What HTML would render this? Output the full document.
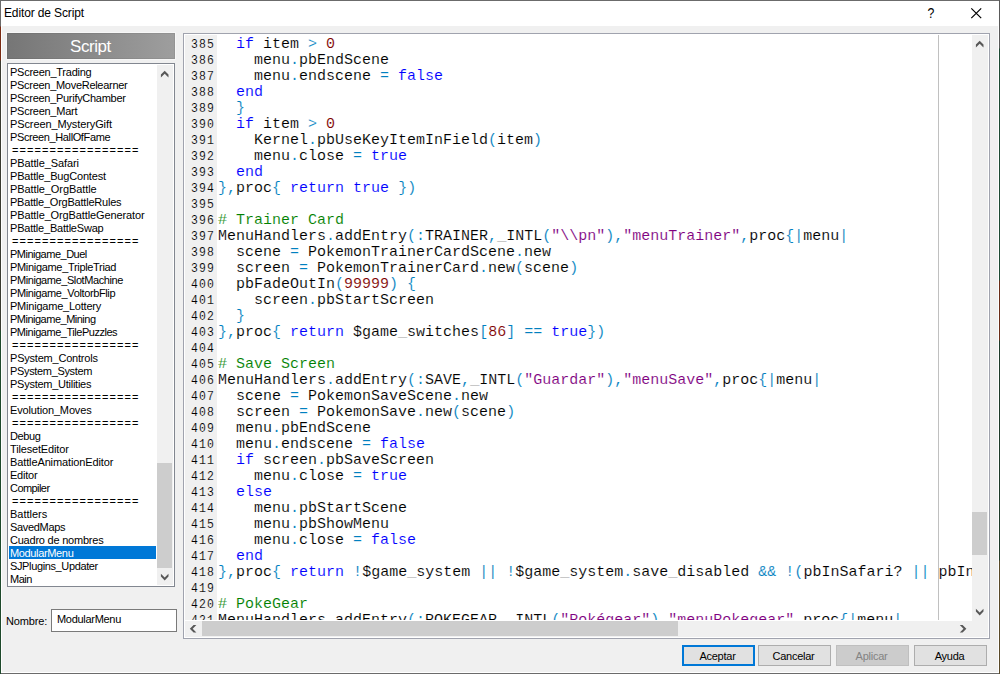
<!DOCTYPE html>
<html lang="es">
<head>
<meta charset="utf-8">
<title>Editor de Script</title>
<style>
*{box-sizing:border-box;margin:0;padding:0}
html,body{width:1000px;height:674px;overflow:hidden;background:#f0f0f0}
body{position:relative;font-family:"Liberation Sans",sans-serif;font-size:11px;color:#000}
.abs{position:absolute}
#edgeL{left:0;top:0;width:1px;height:674px;background:linear-gradient(#6b6b6b 0,#6b6b6b 26px,#7a2a12 27px,#7a2a12 60px,#3a3a30 61px,#3a3a30 330px,#1f4a2c 331px,#1f4a2c 674px)}
#edgeL2{left:1px;top:1px;width:1px;height:672px;background:#fff}
#edgeT{left:0;top:0;width:1000px;height:1px;background:#6b6b6b}
#edgeR{left:999px;top:0;width:1px;height:674px;background:linear-gradient(#5a5a5a 0,#5a5a5a 48px,#1d4a33 49px,#1d4a33 280px,#6a2d18 281px,#6a2d18 340px,#1d3a2a 341px,#1d3a2a 560px,#5a4a2a 561px,#5a4a2a 674px)}
#edgeR2{left:998px;top:1px;width:1px;height:672px;background:#fff}
#edgeB{left:0;top:673px;width:1000px;height:1px;background:#6b6b6b}
#edgeB2{left:1px;top:672px;width:998px;height:1px;background:#fff}
#titlebar{left:1px;top:1px;width:998px;height:25px;background:#fff}
#title{left:4px;top:6px;font-size:12px;line-height:15px;white-space:nowrap;letter-spacing:-0.13px}
#help{left:926.3px;top:6px;width:10px;font-size:14px;line-height:15px;text-align:center;transform:scaleX(.88)}
#hdr{left:7px;top:33px;width:168px;height:26px;background:linear-gradient(90deg,#767676,#9e9e9e);color:#fff;font-size:17px;letter-spacing:-0.45px;line-height:27px;padding-right:1px;text-align:center;box-shadow:0 0 0 1px #f7f7f7,inset 0 0 0 1px rgba(0,0,0,0.06)}
#list{left:7px;top:63px;width:168px;height:524px;border:1px solid #828790;background:#fff}
#items{left:1px;top:1px;width:147px;line-height:13px;font-size:11px;white-space:nowrap;letter-spacing:-0.2px}
#items div{height:13px;padding:1px 0 0 1px}
#items .sep{letter-spacing:1.07px;padding-left:3.1px}
#items .mg{letter-spacing:-0.45px}
#items .sel{background:#0078d7;color:#fff;letter-spacing:-0.34px}
.sb{background:#f0f0f0}
.thumb{background:#cdcdcd}
#nombre{left:6px;top:615px;font-size:11px;line-height:13px;letter-spacing:-0.15px}
#input{left:51px;top:609px;width:126px;height:23px;border:1px solid #7a7a7a;background:#fff;font-size:11px;line-height:13px;padding:3px 0 0 5px;letter-spacing:-0.3px}
#panel{left:183px;top:33px;width:807px;height:606px;border:1px solid #a0a3ae;background:#fff}
#gutter{left:1px;top:1px;width:32px;height:585px;background:#f0f0f0;overflow:hidden}
#nums{left:6.2px;top:2px;font-family:"Liberation Mono",monospace;font-size:13px;line-height:16px;letter-spacing:1.29px;transform:scaleX(.88);transform-origin:0 0}
#nums div{height:16px;-webkit-text-stroke:0.12px #f0f0f0}
#codewrap{left:33px;top:1px;width:755px;height:585px;overflow:hidden;background:#fff}
#code{left:1px;top:2px;font-family:"Liberation Mono",monospace;font-size:15px;line-height:16px}
#code div{height:16px;white-space:pre;-webkit-text-stroke:0.12px #fff}
.k{color:#0000ff}.o{color:#0080c0}.n{color:#800000}.c{color:#008000}.s{color:#800080}
#guide{left:754px;top:1px;width:1px;height:585px;background:#c0c0c0}
.btn{top:645px;width:73px;height:21px;border:1px solid #adadad;background:#e1e1e1;font-size:11px;line-height:19px;text-align:center;letter-spacing:-0.25px;padding:1px 2px 0 0}
#b1{left:682px;border:2px solid #0078d7;line-height:17px}
#b2{left:758px}
#b3{left:836px;color:#838383;background:#cccccc;border-color:#bfbfbf}
#b4{left:914px}
svg{position:absolute;overflow:visible}
</style>
</head>
<body>
<div class="abs" id="titlebar"></div>
<div class="abs" id="title">Editor de Script</div>
<div class="abs" id="help">?</div>
<svg style="left:970.8px;top:7.8px" width="11" height="11" viewBox="0 0 11 11"><path d="M0.3 0.3L10.2 10.2M10.2 0.3L0.3 10.2" stroke="#000" stroke-width="1.2" fill="none"/></svg>

<div class="abs" id="hdr">Script</div>
<div class="abs" id="list">
<div class="abs" id="items">
<div style="letter-spacing:-0.25px">PScreen_Trading</div>
<div style="letter-spacing:-0.29px">PScreen_MoveRelearner</div>
<div style="letter-spacing:-0.29px">PScreen_PurifyChamber</div>
<div style="letter-spacing:-0.26px">PScreen_Mart</div>
<div style="letter-spacing:-0.11px">PScreen_MysteryGift</div>
<div style="letter-spacing:-0.38px">PScreen_HallOfFame</div>
<div class="sep">=================</div>
<div style="letter-spacing:-0.11px">PBattle_Safari</div>
<div style="letter-spacing:-0.18px">PBattle_BugContest</div>
<div style="letter-spacing:-0.09px">PBattle_OrgBattle</div>
<div style="letter-spacing:-0.22px">PBattle_OrgBattleRules</div>
<div style="letter-spacing:-0.12px">PBattle_OrgBattleGenerator</div>
<div style="letter-spacing:-0.21px">PBattle_BattleSwap</div>
<div class="sep">=================</div>
<div style="letter-spacing:-0.50px">PMinigame_Duel</div>
<div style="letter-spacing:-0.32px">PMinigame_TripleTriad</div>
<div style="letter-spacing:-0.42px">PMinigame_SlotMachine</div>
<div style="letter-spacing:-0.38px">PMinigame_VoltorbFlip</div>
<div style="letter-spacing:-0.22px">PMinigame_Lottery</div>
<div style="letter-spacing:-0.50px">PMinigame_Mining</div>
<div style="letter-spacing:-0.47px">PMinigame_TilePuzzles</div>
<div class="sep">=================</div>
<div style="letter-spacing:-0.21px">PSystem_Controls</div>
<div style="letter-spacing:-0.34px">PSystem_System</div>
<div style="letter-spacing:-0.26px">PSystem_Utilities</div>
<div class="sep">=================</div>
<div style="letter-spacing:-0.15px">Evolution_Moves</div>
<div class="sep">=================</div>
<div style="letter-spacing:-0.38px">Debug</div>
<div style="letter-spacing:-0.16px">TilesetEditor</div>
<div style="letter-spacing:-0.12px">BattleAnimationEditor</div>
<div style="letter-spacing:-0.22px">Editor</div>
<div style="letter-spacing:-0.56px">Compiler</div>
<div class="sep">=================</div>
<div style="letter-spacing:-0.02px">Battlers</div>
<div style="letter-spacing:-0.32px">SavedMaps</div>
<div style="letter-spacing:-0.22px">Cuadro de nombres</div>
<div class="sel" style="letter-spacing:-0.35px">ModularMenu</div>
<div style="letter-spacing:-0.37px">SJPlugins_Updater</div>
<div style="letter-spacing:-0.50px">Main</div>
</div>
<div class="abs sb" style="left:149px;top:1px;width:16px;height:520px"></div>
<div class="abs thumb" style="left:149px;top:399px;width:15px;height:105px"></div>
<svg style="left:152.9px;top:6.9px" width="7.4" height="6.2" viewBox="0 0 7.4 6.2"><polygon points="3.7,-0.2 7.5,3.6 7.5,6.4 3.7,2.7 -0.1,6.4 -0.1,3.6" fill="#585858"/></svg>
<svg style="left:152.9px;top:509.8px" width="7.4" height="6.2" viewBox="0 0 7.4 6.2"><polygon points="-0.1,-0.2 3.7,3.5 7.5,-0.2 7.5,2.6 3.7,6.4 -0.1,2.6" fill="#585858"/></svg>
</div>
<div class="abs" id="nombre">Nombre:</div>
<div class="abs" id="input">ModularMenu</div>

<div class="abs" id="panel">
<div class="abs" id="gutter"><div class="abs" id="nums">
<div>385</div>
<div>386</div>
<div>387</div>
<div>388</div>
<div>389</div>
<div>390</div>
<div>391</div>
<div>392</div>
<div>393</div>
<div>394</div>
<div>395</div>
<div>396</div>
<div>397</div>
<div>398</div>
<div>399</div>
<div>400</div>
<div>401</div>
<div>402</div>
<div>403</div>
<div>404</div>
<div>405</div>
<div>406</div>
<div>407</div>
<div>408</div>
<div>409</div>
<div>410</div>
<div>411</div>
<div>412</div>
<div>413</div>
<div>414</div>
<div>415</div>
<div>416</div>
<div>417</div>
<div>418</div>
<div>419</div>
<div>420</div>
<div>421</div>
</div></div>
<div class="abs" id="codewrap"><div class="abs" id="code">
<div>  <span class="k">if</span> item <span class="o">&gt;</span> <span class="n">0</span></div>
<div>    menu<span class="o">.</span>pbEndScene</div>
<div>    menu<span class="o">.</span>endscene <span class="o">=</span> <span class="k">false</span></div>
<div>  <span class="k">end</span></div>
<div>  <span class="o">}</span></div>
<div>  <span class="k">if</span> item <span class="o">&gt;</span> <span class="n">0</span></div>
<div>    Kernel<span class="o">.</span>pbUseKeyItemInField<span class="o">(</span>item<span class="o">)</span></div>
<div>    menu<span class="o">.</span>close <span class="o">=</span> <span class="k">true</span></div>
<div>  <span class="k">end</span></div>
<div><span class="o">}</span><span class="o">,</span>proc<span class="o">{</span> <span class="k">return</span> <span class="k">true</span> <span class="o">}</span><span class="o">)</span></div>
<div>&nbsp;</div>
<div><span class="c"># Trainer Card</span></div>
<div>MenuHandlers<span class="o">.</span>addEntry<span class="o">(</span><span class="o">:</span>TRAINER<span class="o">,</span>_INTL<span class="o">(</span><span class="s">&quot;\\pn&quot;</span><span class="o">)</span><span class="o">,</span><span class="s">&quot;menuTrainer&quot;</span><span class="o">,</span>proc<span class="o">{</span><span class="o">|</span>menu<span class="o">|</span></div>
<div>  scene <span class="o">=</span> PokemonTrainerCardScene<span class="o">.</span>new</div>
<div>  screen <span class="o">=</span> PokemonTrainerCard<span class="o">.</span>new<span class="o">(</span>scene<span class="o">)</span></div>
<div>  pbFadeOutIn<span class="o">(</span><span class="n">99999</span><span class="o">)</span> <span class="o">{</span></div>
<div>    screen<span class="o">.</span>pbStartScreen</div>
<div>  <span class="o">}</span></div>
<div><span class="o">}</span><span class="o">,</span>proc<span class="o">{</span> <span class="k">return</span> $game_switches<span class="o">[</span><span class="n">86</span><span class="o">]</span> <span class="o">=</span><span class="o">=</span> <span class="k">true</span><span class="o">}</span><span class="o">)</span></div>
<div>&nbsp;</div>
<div><span class="c"># Save Screen</span></div>
<div>MenuHandlers<span class="o">.</span>addEntry<span class="o">(</span><span class="o">:</span>SAVE<span class="o">,</span>_INTL<span class="o">(</span><span class="s">&quot;Guardar&quot;</span><span class="o">)</span><span class="o">,</span><span class="s">&quot;menuSave&quot;</span><span class="o">,</span>proc<span class="o">{</span><span class="o">|</span>menu<span class="o">|</span></div>
<div>  scene <span class="o">=</span> PokemonSaveScene<span class="o">.</span>new</div>
<div>  screen <span class="o">=</span> PokemonSave<span class="o">.</span>new<span class="o">(</span>scene<span class="o">)</span></div>
<div>  menu<span class="o">.</span>pbEndScene</div>
<div>  menu<span class="o">.</span>endscene <span class="o">=</span> <span class="k">false</span></div>
<div>  <span class="k">if</span> screen<span class="o">.</span>pbSaveScreen</div>
<div>    menu<span class="o">.</span>close <span class="o">=</span> <span class="k">true</span></div>
<div>  <span class="k">else</span></div>
<div>    menu<span class="o">.</span>pbStartScene</div>
<div>    menu<span class="o">.</span>pbShowMenu</div>
<div>    menu<span class="o">.</span>close <span class="o">=</span> <span class="k">false</span></div>
<div>  <span class="k">end</span></div>
<div><span class="o">}</span><span class="o">,</span>proc<span class="o">{</span> <span class="k">return</span> <span class="o">!</span>$game_system <span class="o">|</span><span class="o">|</span> <span class="o">!</span>$game_system<span class="o">.</span>save_disabled <span class="o">&amp;</span><span class="o">&amp;</span> <span class="o">!</span><span class="o">(</span>pbInSafari? <span class="o">|</span><span class="o">|</span> pbInBugContest?<span class="o">)</span> <span class="o">}</span><span class="o">)</span></div>
<div>&nbsp;</div>
<div><span class="c"># PokeGear</span></div>
<div>MenuHandlers<span class="o">.</span>addEntry<span class="o">(</span><span class="o">:</span>POKEGEAR<span class="o">,</span>_INTL<span class="o">(</span><span class="s">&quot;Pokégear&quot;</span><span class="o">)</span><span class="o">,</span><span class="s">&quot;menuPokegear&quot;</span><span class="o">,</span>proc<span class="o">{</span><span class="o">|</span>menu<span class="o">|</span></div>
</div></div>
<div class="abs" id="guide"></div>
<div class="abs sb" style="left:788px;top:1px;width:16px;height:602px"></div>
<div class="abs sb" style="left:1px;top:587px;width:803px;height:16px"></div>
<div class="abs thumb" style="left:788px;top:478px;width:15px;height:43px"></div>
<div class="abs thumb" style="left:18px;top:587px;width:476px;height:15px"></div>
<svg style="left:791.8px;top:6.8px" width="7.4" height="6.2" viewBox="0 0 7.4 6.2"><polygon points="3.7,-0.2 7.5,3.6 7.5,6.4 3.7,2.7 -0.1,6.4 -0.1,3.6" fill="#585858"/></svg>
<svg style="left:791.8px;top:574.9px" width="7.4" height="6.2" viewBox="0 0 7.4 6.2"><polygon points="-0.1,-0.2 3.7,3.5 7.5,-0.2 7.5,2.6 3.7,6.4 -0.1,2.6" fill="#585858"/></svg>
<svg style="left:5.9px;top:590.7px" width="6.2" height="7.4" viewBox="0 0 6.2 7.4"><polygon points="-0.2,3.7 3.6,-0.1 6.4,-0.1 2.7,3.7 6.4,7.5 3.6,7.5" fill="#585858"/></svg>
<svg style="left:775.9px;top:590.9px" width="6.2" height="7.4" viewBox="0 0 6.2 7.4"><polygon points="-0.2,-0.1 2.6,-0.1 6.4,3.7 2.6,7.5 -0.2,7.5 3.5,3.7" fill="#585858"/></svg>
</div>

<div class="abs btn" id="b1">Aceptar</div>
<div class="abs btn" id="b2">Cancelar</div>
<div class="abs btn" id="b3">Aplicar</div>
<div class="abs btn" id="b4">Ayuda</div>

<div class="abs" id="edgeT"></div>
<div class="abs" id="edgeB2"></div>
<div class="abs" id="edgeB"></div>
<div class="abs" id="edgeL2"></div>
<div class="abs" id="edgeR2"></div>
<div class="abs" id="edgeL"></div>
<div class="abs" id="edgeR"></div>
</body>
</html>
